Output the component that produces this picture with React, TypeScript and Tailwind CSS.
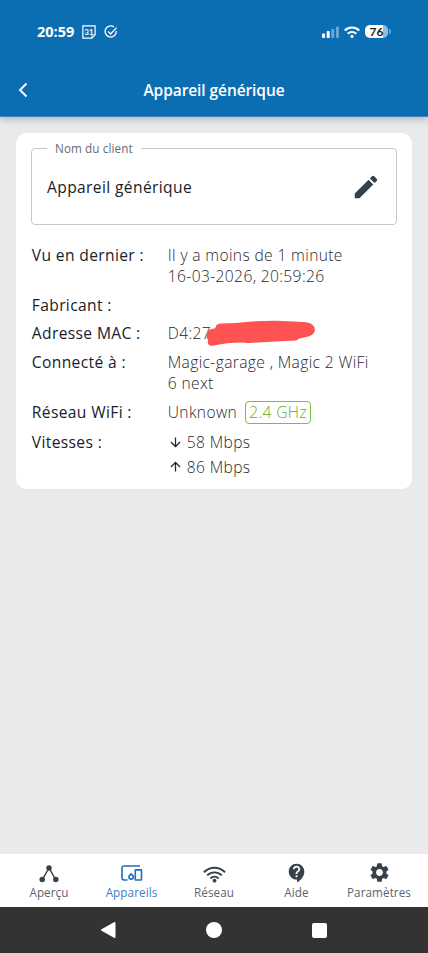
import React from 'react';
import { MdArrowDownward, MdArrowUpward, MdContactSupport, MdEdit, MdSettings } from 'react-icons/md';

interface DetailRowProps {
  label: string;
  children?: React.ReactNode;
}

const DetailRow: React.FC<DetailRowProps> = ({ label, children }) => (
  <div className="flex">
    <dt className="w-[136px] shrink-0 font-medium text-[#17212b]">{label}</dt>
    <dd className="min-w-0 flex-1 font-light text-[#1f272f]">{children}</dd>
  </div>
);

interface NavItemProps {
  label: string;
  active?: boolean;
  children: React.ReactNode;
}

const NavItem: React.FC<NavItemProps> = ({ label, active, children }) => (
  <button className={`flex w-[82.5px] flex-col items-center ${active ? 'text-[#1c6fba]' : 'text-[#37414a]'}`}>
    <span className="flex h-6 items-center justify-center">{children}</span>
    <span className={`text-[11.7px] leading-[14px] tracking-[0.08px] ${active ? 'text-[#3c80c4]' : 'text-[#5d656c]'}`}>{label}</span>
  </button>
);

const StatusBar: React.FC = () => (
  <div className="flex h-[63px] items-center justify-between pr-[37px] pl-[37px] text-white">
    <div className="flex items-center">
      <span className="w-[45px] text-[14.5px] font-bold">20:59</span>
      <svg className="h-[14px] w-[14px]" viewBox="0 0 14 14" fill="none" stroke="currentColor" strokeWidth="1.2">
        <path d="M.9.8h12.200v9L9.900 13.200H.9z" />
        <path d="M9.800 13V9.900H13" strokeWidth=".7" />
        <text x="6.900" y="9.700" textAnchor="middle" fill="currentColor" stroke="none" fontSize="7.500" fontWeight="700" fontFamily="Lato, sans-serif">31</text>
      </svg>
      <svg className="ml-2 h-[14px] w-[14px]" viewBox="0 0 14 14" fill="none" stroke="currentColor" strokeWidth="1.300">
        <path d="M10 1.900A5.600 5.600 0 1 0 12.300 6M4 6.400l2.600 2.600 6-6.400" />
      </svg>
    </div>
    <div className="flex items-center">
      <svg className="h-3 w-[17px]" viewBox="0 0 17 12" fill="currentColor">
        <rect x="0" y="7.500" width="3" height="4.500" rx=".8" />
        <rect x="4.700" y="5" width="3" height="7" rx=".8" />
        <rect x="9.400" y="2.700" width="2.800" height="9.300" rx=".8" opacity=".4" />
        <rect x="14" y=".5" width="2.800" height="11.500" rx=".8" opacity=".4" />
      </svg>
      <svg className="ml-[5px] h-3 w-4" viewBox="0 0 16 12" fill="none" stroke="currentColor" strokeWidth="2.100">
        <path d="M.8 4.500C4.800.5 11.200.5 15.200 4.500M3.700 7.700c2.400-2.200 6.200-2.200 8.600 0" />
        <circle cx="8" cy="10.400" r="1.600" fill="currentColor" stroke="none" />
      </svg>
      <div className="ml-[5px] flex h-[13px] w-[23px] items-center justify-center rounded-[5px] bg-linear-to-r from-white from-78% to-[#91bddd] to-78% text-[12px] leading-none font-bold text-[#222]">
        <span className="font-['Lato',sans-serif]">76</span>
      </div>
      <div className="ml-px h-[5px] w-[2px] rounded-r-full bg-[#6aa5cf]" />
    </div>
  </div>
);

export default function App() {
  return (
    <div className="flex h-[953px] w-[428px] flex-col bg-[#e9eaec] font-['Open_Sans',sans-serif]">
      <header className="h-[117px] shrink-0 border-b border-[#4b80bd] bg-[#0c6eb2] shadow-[0_2px_7px_rgba(0,0,0,0.25)]">
        <StatusBar />
        <div className="grid h-[54px] grid-cols-[60px_1fr_60px] items-center text-white">
          <button className="pl-[18px]">
            <svg className="h-4 w-[10px]" viewBox="0 0 10 16" fill="none" stroke="currentColor" strokeWidth="1.900">
              <path d="M8.500 1.500 2 8l6.500 6.500" />
            </svg>
          </button>
          <h1 className="pt-px text-center text-[15.5px] font-semibold tracking-[-0.08px]">Appareil générique</h1>
        </div>
      </header>

      <main className="flex-1 px-4 pt-4">
        <section className="h-[355.5px] rounded-[11px] bg-white px-[15px] pt-[8px]">
          <fieldset className="h-[84px] rounded-[4px] border border-[#c5c7c9] pl-[15px]">
            <legend className="px-[8px] text-[11.7px] leading-[15px] tracking-[0.1px] text-[#656c73]">Nom du client</legend>
            <div className="flex h-[62px] items-center justify-between pr-[15px]">
              <span className="pt-px text-[15.6px] font-medium tracking-[0.37px] text-[#17212b]">Appareil générique</span>
              <MdEdit className="h-[30px] w-[30px] text-[#37414a]" />
            </div>
          </fieldset>

          <dl className="mt-[19px] flex flex-col gap-2 pt-px pl-[0.8px] text-[15.6px] leading-[20.8px] tracking-[0.36px]">
            <DetailRow label="Vu en dernier :">
              <p>Il y a moins de 1 minute</p>
              <p>16-03-2026, 20:59:26</p>
            </DetailRow>
            <DetailRow label="Fabricant :" />
            <DetailRow label="Adresse MAC :">
              <div className="relative">
                D4:27
                <svg className="absolute top-[-3px] left-[38px] h-[27px] w-[110px]" viewBox="0 0 110 27" fill="#ff5252">
                  <path d="M10.500 5Q12 3.300 15 3.400L30 3Q50 .6 70 .7L98 2Q109 2.500 109 10.500Q108 16 98 17.500Q93 18 90 20.500Q70 21.300 47 22.700Q43 23.500 37 22.500Q20 22.500 8 25.500Q.5 27 2 20Q-1 16 2 11Q5 8 9 8.500Z" />
                </svg>
              </div>
            </DetailRow>
            <DetailRow label="Connecté à :">
              <p className="w-[210px]">Magic-garage , Magic 2 WiFi 6 next</p>
            </DetailRow>
            <DetailRow label="Réseau WiFi :">
              <div className="flex h-[22px] items-center">
                Unknown
                <span className="ml-[8px] flex h-[23px] w-[66px] items-center justify-center rounded-[4px] border border-[#79bf45] text-[#5fae26]">2.4 GHz</span>
              </div>
            </DetailRow>
            <DetailRow label="Vitesses :">
              <p className="flex items-center"><MdArrowDownward className="mr-1 h-[15px] w-[15px]" />58 Mbps</p>
              <p className="mt-1 flex items-center"><MdArrowUpward className="mr-1 h-[15px] w-[15px]" />86 Mbps</p>
            </DetailRow>
          </dl>
        </section>
      </main>

      <nav className="flex h-[53.5px] shrink-0 justify-center bg-white pt-[7px]">
        <NavItem label="Aperçu">
          <svg className="mt-[3px] h-[18px] w-5" viewBox="0 0 20 18" fill="currentColor" stroke="currentColor" strokeWidth="1.500">
            <path d="M10 3 3.400 14.500M10 3l6.600 11.500" />
            <circle cx="10" cy="3" r="2" />
            <circle cx="3.200" cy="14.500" r="2" />
            <circle cx="16.800" cy="14.500" r="2" />
          </svg>
        </NavItem>
        <NavItem label="Appareils" active>
          <svg className="h-4 w-[22px]" viewBox="0 0 22 16" fill="none" stroke="currentColor" strokeWidth="1.600">
            <path d="M19 1H3Q1 1 1 3v9.800Q1 15 3 15h3.500" />
            <circle cx="10.100" cy="11.900" r="2.200" />
            <path d="M10.100 9.500V8.200" strokeWidth="2" />
            <rect x="14.300" y="4.900" width="6.200" height="10.100" rx=".4" />
          </svg>
        </NavItem>
        <NavItem label="Réseau">
          <svg className="mt-[3px] h-[17px] w-[23px]" viewBox="0 0 23 17" fill="none" stroke="currentColor" strokeWidth="1.900">
            <path d="M.9 6.200C7 .2 16 .2 22.100 6.200M4.200 9.400c4.200-4 10.400-4 14.600 0M7.400 12.500c2.400-2.300 5.800-2.300 8.200 0" />
            <circle cx="11.500" cy="14.700" r="1.900" fill="currentColor" stroke="none" />
          </svg>
        </NavItem>
        <NavItem label="Aide">
          <MdContactSupport className="h-[22px] w-[22px]" />
        </NavItem>
        <NavItem label="Paramètres">
          <MdSettings className="h-[23px] w-[23px]" />
        </NavItem>
      </nav>

      <div className="grid h-[46px] shrink-0 grid-cols-[106px_106px_106px] items-center justify-center justify-items-center bg-[#333] text-white">
        <svg className="h-[18px] w-4" viewBox="0 0 16 18" fill="currentColor" stroke="currentColor" strokeWidth="2" strokeLinejoin="round">
          <path d="M14.500 2v14L2 9z" />
        </svg>
        <div className="h-4 w-4 rounded-full bg-white" />
        <div className="mr-px h-[15px] w-[15px] rounded-[2px] bg-white" />
      </div>
    </div>
  );
}
